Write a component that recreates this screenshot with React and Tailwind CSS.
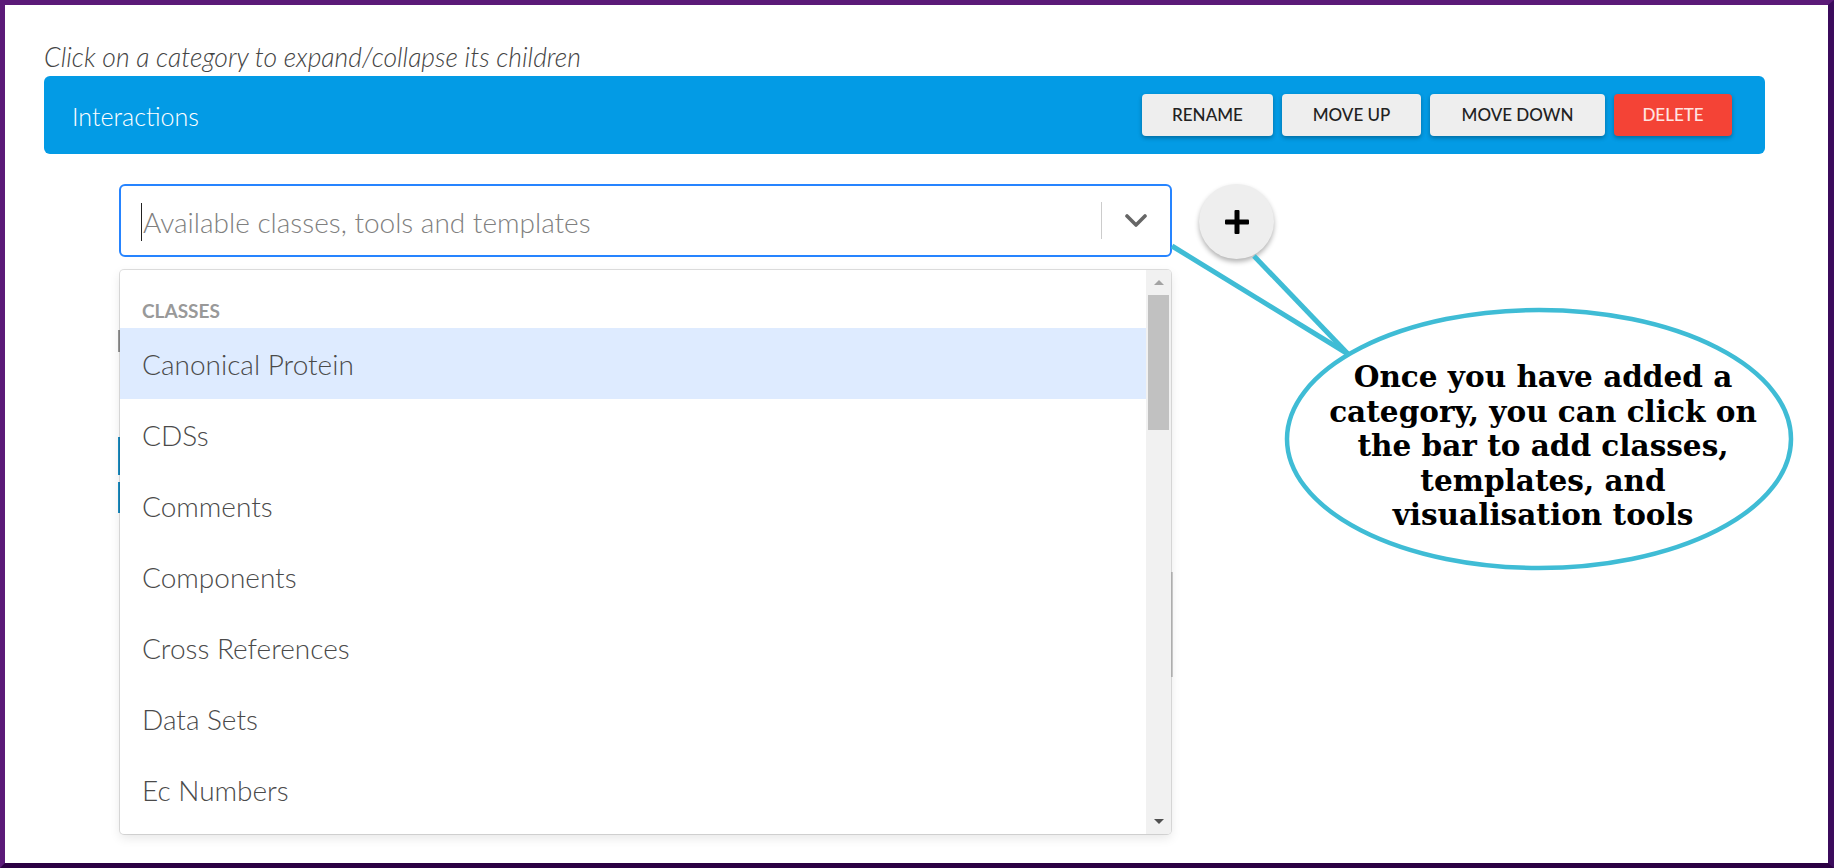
import React from "react";

const sans = "font-['Lato','Liberation_Sans',sans-serif]";
const buttonClass = `h-[42px] rounded-[4px] text-[17px] font-medium ${sans} shadow-[0_2px_4px_rgba(0,0,0,0.3)] flex items-center justify-center`;
const greyButtonClass = `${buttonClass} bg-[#eeeeee] text-[#222]`;

const options = [
  "Canonical Protein",
  "CDSs",
  "Comments",
  "Components",
  "Cross References",
  "Data Sets",
  "Ec Numbers",
];

const Chevron = () => (
  <svg width="22" height="14" viewBox="0 0 22 14">
    <polyline
      points="2,2 11,11 20,2"
      fill="none"
      stroke="#666"
      strokeWidth="3.6"
      strokeLinecap="round"
      strokeLinejoin="round"
    />
  </svg>
);

const Plus = () => (
  <svg width="24" height="24" viewBox="0 0 24 24">
    <rect x="9.5" y="0" width="5" height="24" rx="1" fill="#000" />
    <rect x="0" y="9.5" width="24" height="5" rx="1" fill="#000" />
  </svg>
);

const Scrollbar = () => (
  <div className="w-[25px] bg-[#f1f1f1] flex flex-col">
    <div className="h-[25px] flex items-center justify-center">
      <div className="w-0 h-0 border-l-[5px] border-r-[5px] border-b-[5px] border-l-transparent border-r-transparent border-b-[#a3a3a3]" />
    </div>
    <div className="h-[135px] mx-[2px] bg-[#c1c1c1]" />
    <div className="flex-1" />
    <div className="h-[26px] flex items-center justify-center">
      <div className="w-0 h-0 border-l-[5px] border-r-[5px] border-t-[5px] border-l-transparent border-r-transparent border-t-[#505050]" />
    </div>
  </div>
);

const Dropdown = () => (
  <div className="absolute left-[1px] top-[86px] z-10 w-[1051px] h-[564px] bg-white rounded-[4px] overflow-hidden flex shadow-[0_0_0_1px_rgba(0,0,0,0.12),0_4px_11px_rgba(0,0,0,0.1)]">
    <div className="flex-1 overflow-hidden">
      <div className={`h-[58px] pt-[31px] pl-[22px] text-[19px] leading-[19px] font-bold uppercase text-[#999] ${sans}`}>
        Classes
      </div>
      {options.map((option, i) => (
        <div
          key={option}
          className={`h-[71px] flex items-center pl-[22px] text-[28px] font-light text-[#4a4a4a] ${sans} ${
            i === 0 ? "bg-[#deebff]" : ""
          }`}
        >
          {option}
        </div>
      ))}
    </div>
    <Scrollbar />
  </div>
);

// speech bubble pointing at the select and the + button
const Callout = () => (
  <>
    <svg
      className="absolute left-0 top-0 pointer-events-none z-20"
      width="1834"
      height="868"
      viewBox="0 0 1834 868"
    >
      <line x1="1172" y1="246" x2="1348" y2="354" stroke="#3fbcd5" strokeWidth="5" />
      <line x1="1254" y1="256" x2="1348" y2="354" stroke="#3fbcd5" strokeWidth="5" />
      <ellipse cx="1539" cy="439" rx="252" ry="129" fill="#fff" stroke="#3fbcd5" strokeWidth="4.5" />
    </svg>
    <div className="absolute left-[1293px] top-[360px] w-[500px] z-30 text-center text-[29.5px] leading-[34.5px] font-bold text-black font-['DejaVu_Serif',serif]">
      Once you have added a<br />
      category, you can click on<br />
      the bar to add classes,<br />
      templates, and<br />
      visualisation tools
    </div>
  </>
);

export default function App() {
  return (
    <div className="relative w-[1834px] h-[868px] overflow-hidden bg-white">
      <div className="h-full box-border border-t-[5px] border-l-[5px] border-r-[6px] border-b-[5px] border-t-[#5b1a78] border-l-[#5b1a78] border-r-[#3b0b5c] border-b-[#2b0043]">
        <div className="pl-[39px] pr-[63px]">
          <p className={`mt-[37px] text-[26.5px] leading-[30px] italic font-light text-[#444] ${sans}`}>
            Click on a category to expand/collapse its children
          </p>

          <div className="mt-[4px] h-[78px] rounded-[6px] bg-[#039be5] flex items-center justify-between pl-[28px] pr-[33px]">
            <span className={`pt-[3px] text-[25px] font-light text-white ${sans}`}>Interactions</span>
            <div className="flex gap-[9px]">
              <button className={`${greyButtonClass} w-[131px]`}>RENAME</button>
              <button className={`${greyButtonClass} w-[139px]`}>MOVE UP</button>
              <button className={`${greyButtonClass} w-[175px]`}>MOVE DOWN</button>
              <button className={`${buttonClass} w-[118px] bg-[#f44336] text-[#ffe4e1]`}>DELETE</button>
            </div>
          </div>

          <div className="ml-[75px] mt-[30px] flex items-start gap-[27px]">
            <div className="relative w-[1053px]">
              <div className="h-[73px] box-border border-2 border-[#2684ff] rounded-[6px] flex items-center bg-white">
                <div className={`flex-1 flex items-center pl-[20px] pt-[3px] text-[28px] font-light text-[#808080] ${sans}`}>
                  <span className="inline-block w-px h-[38px] bg-[#222] mr-[1px]" />
                  Available classes, tools and templates
                </div>
                <div className="w-px h-[37px] bg-[#cccccc]" />
                <div className="w-[68px] flex items-center justify-center">
                  <Chevron />
                </div>
              </div>
              <Dropdown />
              <div className="-ml-px">
                <div className="mt-[73px] h-[22px] w-[300px] border-l-2 border-[#999]" />
                <div className="mt-[85px] h-[38px] w-[300px] border-l-2 border-[#1b8ec4]" />
                <div className="mt-[7px] h-[31px] w-[300px] border-l-2 border-[#1b8ec4]" />
                <div className="mt-[59px] h-[105px] w-[1055px] border-r-2 border-[#cfcfcf]" />
              </div>
            </div>
            <button className="w-[75px] h-[75px] rounded-full bg-[#eeeeee] flex items-center justify-center shadow-[0_3px_5px_rgba(0,0,0,0.3)]">
              <Plus />
            </button>
          </div>
        </div>
      </div>
      <Callout />
    </div>
  );
}
